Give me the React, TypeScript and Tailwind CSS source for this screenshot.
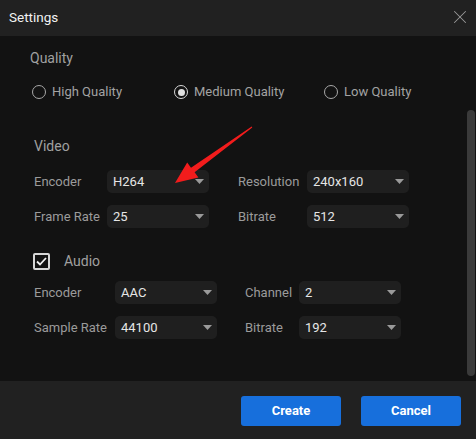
import React from 'react';
import { X } from 'lucide-react';

const Radio = ({ label, checked }: { label: string; checked?: boolean }) => (
  <div className="flex items-center gap-[6px]">
    <span
      className={`w-[14px] h-[14px] rounded-full border-[1.5px] flex items-center justify-center ${
        checked ? 'border-[#d8d8d8]' : 'border-[#a8a8a8]'
      }`}
    >
      {checked && <span className="w-[7px] h-[7px] rounded-full bg-[#e0e0e0]" />}
    </span>
    <span className="text-[13px] text-[#a3a3a3]">{label}</span>
  </div>
);

const Select = ({ value }: { value: string }) => (
  <div className="w-[102px] h-[23px] rounded-[5px] bg-[#1f1f1f] flex items-center justify-between pl-[6px] pr-[5px]">
    <span className="text-[13px] text-[#e6e6e6]">{value}</span>
    <svg width="9" height="5" viewBox="0 0 9 5">
      <polygon points="0,0 9,0 4.5,5" fill="#9a9a9a" />
    </svg>
  </div>
);

const Row = ({
  l1, v1, l2, v2, w1, gap, w2,
}: { l1: string; v1: string; l2: string; v2: string; w1: string; gap: string; w2: string }) => (
  <div className="flex items-center">
    <span className={`${w1} text-[13px] text-[#9b9b9b]`}>{l1}</span>
    <Select value={v1} />
    <span className={`${gap} ${w2} text-[13px] text-[#9b9b9b]`}>{l2}</span>
    <Select value={v2} />
  </div>
);

export default function App() {
  return (
    <div className="relative w-[476px] h-[439px] bg-[#121212] flex flex-col font-['Roboto',sans-serif] overflow-hidden">
      {/* Header */}
      <div className="h-[36px] bg-[#212121] flex items-center justify-between pl-[9px] pr-[5px] shrink-0">
        <span className="text-[13.5px] text-[#f2f2f2] -mt-[2px]">Settings</span>
        <X size={22} strokeWidth={1.1} className="text-[#9a9a9a] -mt-[3px]" />
      </div>

      {/* Body */}
      <div className="relative flex-1 pl-[30px] pt-[12px]">
        <div className="text-[14px] leading-[20px] text-[#a0a0a0]">Quality</div>
        <div className="mt-[14px] h-[20px] flex items-center pl-[2px]">
          <div className="w-[142px]"><Radio label="High Quality" /></div>
          <div className="w-[150px]"><Radio label="Medium Quality" checked /></div>
          <Radio label="Low Quality" />
        </div>

        <div className="pl-[4px]">
          <div className="mt-[34px] text-[14px] leading-[20px] text-[#a0a0a0]">Video</div>
          <div className="mt-[14px] flex flex-col gap-[12px]">
            <Row l1="Encoder" v1="H264" l2="Resolution" v2="240x160" w1="w-[73px]" gap="ml-[29px]" w2="w-[69px]" />
            <Row l1="Frame Rate" v1="25" l2="Bitrate" v2="512" w1="w-[73px]" gap="ml-[29px]" w2="w-[69px]" />
          </div>
        </div>

        <div className="mt-[23px] h-[20px] flex items-center pl-[3px]">
          <span className="w-[17px] h-[17px] border-2 border-[#d6d6d6] rounded-[2px] flex items-center justify-center">
            <svg width="11" height="9" viewBox="0 0 11 9">
              <path d="M1 4.5 L4 7.5 L10 1" fill="none" stroke="#f0f0f0" strokeWidth="1.8" />
            </svg>
          </span>
          <span className="ml-[14px] text-[14px] text-[#a0a0a0]">Audio</span>
        </div>

        <div className="pl-[4px] mt-[10px] flex flex-col gap-[12px]">
          <Row l1="Encoder" v1="AAC" l2="Channel" v2="2" w1="w-[81px]" gap="ml-[28px]" w2="w-[54px]" />
          <Row l1="Sample Rate" v1="44100" l2="Bitrate" v2="192" w1="w-[81px]" gap="ml-[28px]" w2="w-[54px]" />
        </div>

        {/* Scrollbar */}
        <div className="absolute right-[1px] top-[74px] w-[8px] h-[266px] rounded-full bg-[#3a3a3a]" />
      </div>

      {/* Footer */}
      <div className="h-[58px] bg-[#212121] flex items-center justify-end gap-[20px] pr-[15px] pt-[2px] shrink-0">
        <button className="w-[100px] h-[30px] rounded-[3px] bg-[#176fdc] text-white text-[13px] font-bold">Create</button>
        <button className="w-[100px] h-[30px] rounded-[3px] bg-[#176fdc] text-white text-[13px] font-bold">Cancel</button>
      </div>

      {/* Annotation arrow */}
      <svg className="absolute left-0 top-0 pointer-events-none" width="476" height="439">
        <polygon
          points="252.3,127.4 194.6,172.3 198.4,177.6 175,183 187.2,162.4 191.0,167.7 251.7,126.6"
          fill="#f21c1c"
        />
      </svg>
    </div>
  );
}
